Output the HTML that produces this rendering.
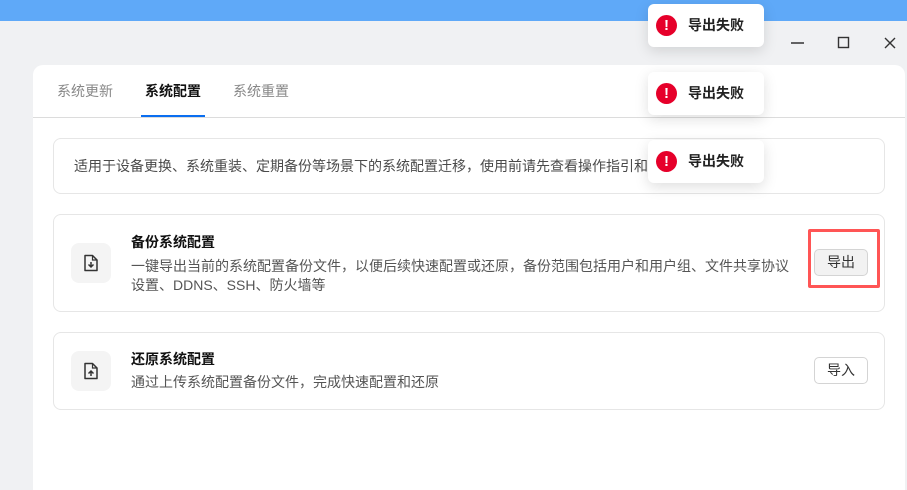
<!DOCTYPE html>
<html><head><meta charset="utf-8"><style>
*{margin:0;padding:0;box-sizing:border-box}
html,body{width:907px;height:490px;overflow:hidden}
body{background:#f0f1f3;font-family:"Liberation Sans","Noto Sans CJK SC",sans-serif;position:relative}
.top{position:absolute;left:0;top:0;width:907px;height:21px;background:#5fa9f8}
.win{position:absolute;left:0;top:21px;width:907px;height:469px;background:#f0f1f3;border-top-right-radius:8px}
.card{position:absolute;left:33px;top:65px;width:872px;height:425px;background:#fff;border-radius:10px 10px 0 0}
.tab{position:absolute;top:82px;font-size:14px;color:#888;line-height:18px}
.box{position:absolute;left:53px;width:832px;border:1px solid #e6e6e6;border-radius:8px;background:#fff}
.ico{position:absolute;left:17px;width:40px;height:40px;background:#f4f4f4;border-radius:8px}
.ico svg{position:absolute;left:12px;top:11px}
.t{position:absolute;left:77px;font-size:14px;font-weight:bold;color:#111;line-height:18px}
.d{position:absolute;left:77px;font-size:14px;color:#555;line-height:19px}
.btn{position:absolute;width:54px;height:27px;border:1px solid #d4d4d4;border-radius:5px;font-size:14px;color:#333;text-align:center;line-height:25px;background:#fff}
.toast{position:absolute;left:648px;width:116px;height:43px;background:#fff;border-radius:6px;box-shadow:0 4px 14px rgba(0,0,0,.13)}
.toast .c{position:absolute;left:8px;top:11px;width:21px;height:21px;border-radius:50%;background:#e6002a;color:#fff;font-weight:bold;font-size:15px;text-align:center;line-height:21px}
.toast span{position:absolute;left:40px;top:13px;font-size:14px;color:#222;font-weight:bold;line-height:17px}
</style></head><body>
<div class="top"></div>
<div class="win"></div>
<svg style="position:absolute;left:790px;top:36px" width="110" height="14"><line x1="1" y1="7" x2="14" y2="7" stroke="#333" stroke-width="1.5"/><rect x="48.5" y="1.5" width="10" height="10" fill="none" stroke="#333" stroke-width="1.4"/><path d="M95 2l10 10M105 2l-10 10" stroke="#333" stroke-width="1.4"/></svg>
<div class="card"></div>
<div class="tab" style="left:57px">系统更新</div>
<div class="tab" style="left:145px;color:#111;font-weight:bold">系统配置</div>
<div class="tab" style="left:233px">系统重置</div>
<div style="position:absolute;left:141px;top:115px;width:64px;height:2px;background:#0a6ef0"></div>
<div style="position:absolute;left:33px;top:117px;width:872px;height:1px;background:#dcdcdc"></div>
<div class="box" style="top:138px;height:56px"><div style="position:absolute;left:20px;top:18px;font-size:14px;color:#4a4a4a;line-height:19px;white-space:nowrap">适用于设备更换、系统重装、定期备份等场景下的系统配置迁移，使用前请先查看操作指引和<span style="color:#0a6ef0">查看</span></div></div>
<div class="box" style="top:214px;height:98px">
<div class="ico" style="top:28px"><svg width="16" height="18" viewBox="0 0 16 18"><path d="M2 1.5h7.5l4.5 4.5v10.5h-12z" fill="none" stroke="#333" stroke-width="1.5" stroke-linejoin="round"/><path d="M9.5 1.5v4.5h4.5" fill="none" stroke="#333" stroke-width="1.2"/><path d="M8 8v5M5.5 10.5L8 13l2.5-2.5" fill="none" stroke="#333" stroke-width="1.5"/></svg></div>
<div class="t" style="top:18px">备份系统配置</div>
<div class="d" style="top:42px">一键导出当前的系统配置备份文件，以便后续快速配置或还原，备份范围包括用户和用户组、文件共享协议<br>设置、DDNS、SSH、防火墙等</div>
<div class="btn" style="left:760px;top:34px;background:#f2f2f2">导出</div>
</div>
<div style="position:absolute;left:808px;top:229px;width:72px;height:59px;border:3px solid #f55;border-radius:2px"></div>
<div class="box" style="top:332px;height:78px">
<div class="ico" style="top:18px"><svg width="16" height="18" viewBox="0 0 16 18"><path d="M2 1.5h7.5l4.5 4.5v10.5h-12z" fill="none" stroke="#333" stroke-width="1.5" stroke-linejoin="round"/><path d="M9.5 1.5v4.5h4.5" fill="none" stroke="#333" stroke-width="1.2"/><path d="M8 14V9M5.5 11.5L8 9l2.5 2.5" fill="none" stroke="#333" stroke-width="1.5"/></svg></div>
<div class="t" style="top:17px">还原系统配置</div>
<div class="d" style="top:40px">通过上传系统配置备份文件，完成快速配置和还原</div>
<div class="btn" style="left:760px;top:24px">导入</div>
</div>
<div class="toast" style="top:4px"><div class="c">!</div><span>导出失败</span></div>
<div class="toast" style="top:72px"><div class="c">!</div><span>导出失败</span></div>
<div class="toast" style="top:140px"><div class="c">!</div><span>导出失败</span></div>
</body></html>
